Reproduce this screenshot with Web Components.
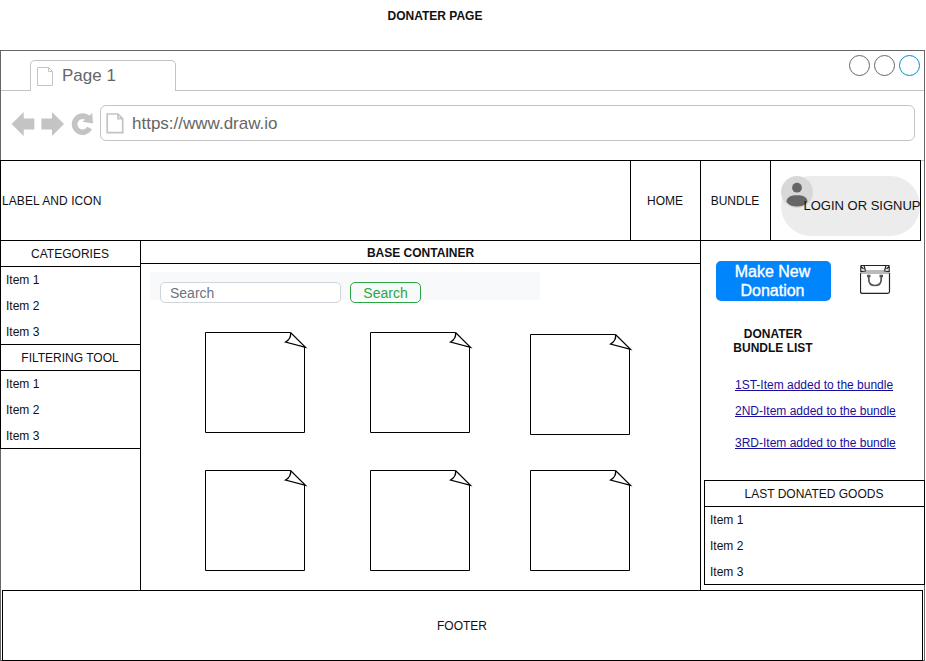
<!DOCTYPE html>
<html lang="en">
<head>
<meta charset="utf-8">
<title>Donater page</title>
<style>
body{margin:0;width:926px;height:661px;overflow:hidden;background:#fff;color:#111;font:12px/14px "Liberation Sans",Arial,sans-serif}
</style>
</head>
<body>
<donater-page></donater-page>
<script>
const define=(name,css,html)=>customElements.define(name,class extends HTMLElement{
  constructor(){super();this.attachShadow({mode:'open'}).innerHTML=`<style>*{box-sizing:border-box}:host{box-sizing:border-box;display:block}${css}</style>${typeof html==='function'?html(this):html}`;}
});

define('nav-icons',':host{display:flex;align-items:center;gap:6px;width:84px;height:26px}svg{display:block;fill:#c4c4c4}',`
<svg width="24" height="26" viewBox="0 0 24 26"><path d="M.5 13 12.7 1v6.5h10.6v11H12.7V25z"/></svg>
<svg width="24" height="26" viewBox="0 0 24 26"><path d="M23 13 11 1v6.5H.4v11H11V25z"/></svg>
<svg width="24" height="26" viewBox="0 0 24 26"><path d="M17.6 7.900A8 8 0 1 0 18.600 17" fill="none" stroke="#c4c4c4" stroke-width="5.6"/><path d="M21.300 2 22 12.600 11.500 10.700z"/></svg>`);

define('page-icon',':host{flex:none}svg{display:block}',el=>el.hasAttribute('bold')?
`<svg width="18" height="21" viewBox="0 0 18 21" fill="none" stroke="#c4c4c4" stroke-width="1.7"><path d="M1.200 1H12L16.700 5.700V19.700H1.200zM12 1V5.700H16.700"/></svg>`:
`<svg width="17" height="20" viewBox="0 0 17 20" fill="none" stroke="#c4c4c4"><path d="M.5 .5H11.5L15.5 4.5V18.5H.5zM11.5 .5V4.5H15.5"/></svg>`);

define('window-controls',':host{display:flex;gap:4px}i{width:21px;height:21px;border:1px solid #666;border-radius:50%}i:last-child{border-color:#008cce}','<i></i><i></i><i></i>');

define('browser-window',`
:host{width:925px;height:611px;border:1px solid #666}
.tabs{display:flex;height:40px;align-items:stretch}
.lead{width:29px;border-bottom:1px solid #c4c4c4}
.tab{width:146px;margin-top:9px;border:1px solid #c4c4c4;border-bottom:0;border-radius:5px 5px 0 0;display:flex;gap:8px;padding:6px 0 0 6px;font-size:17px;line-height:19px;color:#666}
.tab span{margin-top:-1px}
.rest{flex:1;border-bottom:1px solid #c4c4c4;display:flex;justify-content:flex-end;padding:4px 4px 0 0}
.bar{height:69px;display:flex;padding:14px 9px 0 10px;gap:5px}
nav-icons{margin-top:6px}
.address{flex:1;height:36px;border:1px solid #c4c4c4;border-radius:6px;display:flex;align-items:center;gap:8px;padding-left:5px;font-size:17px;line-height:19px;color:#666}
.content{margin:0 -1px -1px}`,`
<div class="tabs"><div class="lead"></div><div class="tab"><page-icon></page-icon><span><slot name="tab"></slot></span></div><div class="rest"><window-controls></window-controls></div></div>
<div class="bar"><nav-icons></nav-icons><div class="address"><page-icon bold></page-icon><slot name="url"></slot></div></div>
<div class="content"><slot></slot></div>`);

define('user-avatar',':host{width:32px;height:32px;flex:none}svg{display:block}',`<svg width="32" height="32" viewBox="0 0 32 32"><circle cx="16" cy="16" r="16" fill="#d8d8d8"/><circle cx="16" cy="11.700" r="4.900" fill="#666"/><path d="M5.500 26C5.500 21 10 19.300 16 19.300S26.500 21 26.500 26Q23 30.500 16 30.500T5.500 26z" fill="#666"/></svg>`);

define('login-button',`
:host{width:139px;height:60px;border-radius:30px;background:#ececec;display:flex;align-items:flex-start}
span{font-size:13px;line-height:16px;white-space:nowrap;margin:22px 0 0 -9px}`,
'<user-avatar></user-avatar><span><slot></slot></span>');

define('header-bar',`
:host{display:flex;height:81px}
.bar{display:flex;width:921px;border:1px solid #000;border-right:0}
.bar>div{border-right:1px solid #000;width:70px;display:flex;align-items:center;justify-content:center;padding-right:1px}
.bar>.brand{width:630px;justify-content:flex-start;padding-left:1px;letter-spacing:.09px}
.bar>.user{width:150px;align-items:flex-start;justify-content:flex-start;padding:14.500px 0 0 9.500px}
.fill{flex:1;border-top:1px solid #c4c4c4;margin-right:1px}`,`
<div class="bar"><div class="brand"><slot name="brand"></slot></div><div><slot name="home"></slot></div><div><slot name="bundle"></slot></div><div class="user"><slot name="user"></slot></div></div><div class="fill"></div>`);

define('item-list',`
h2{margin:0;font:inherit;height:26px;line-height:26px;text-align:center;border-bottom:1px solid #000;padding-right:1px}
div{height:26px;line-height:27px;padding-left:5px}
div:last-child{border-bottom:1px solid #000}`,
el=>`<h2>${el.getAttribute('heading')}</h2><div>Item 1</div><div>Item 2</div><div>Item 3</div>`);

define('search-bar',`
:host{width:390px;height:28px;background:#f8f9fa;display:flex;gap:9px;padding:10px 0 0 10px;font-size:14px;line-height:20px}
div{height:21px;border-radius:5px}
.field{width:181px;border:1px solid #ced4da;background:#fff;color:#6c757d;padding-left:9px}
.go{width:71px;border:1px solid #28a745;color:#28a745;text-align:center}`,
'<div class="field">Search</div><div class="go">Search</div>');

define('note-card',':host{width:101px;height:101px}svg{display:block;overflow:visible}',`<svg width="101" height="101" viewBox="0 0 101 101" fill="none" stroke="#000"><path d="M85.500 .5H.5V100.500H99.500V15"/><path stroke-width="1.200" d="M85.500 .5 100.500 15.300 80.500 10Q86.500 6.500 85.500 .5"/></svg>`);

define('base-container',`
:host{width:561px;height:349px;border:solid #000;border-width:0 1px}
h1{margin:0;font-size:12px;line-height:24px;height:23px;text-align:center;border-bottom:1px solid #000}
search-bar{margin:8px 0 0 9px}
.grid{display:grid;grid-template-columns:165px 160px 101px;grid-auto-rows:138px;margin:32px 0 0 64px}
.low{margin-top:2px}`,`
<h1><slot></slot></h1><search-bar></search-bar>
<div class="grid"><note-card></note-card><note-card></note-card><note-card class="low"></note-card><note-card></note-card><note-card></note-card><note-card></note-card></div>`);

define('bag-icon',':host{width:31px;height:30px}svg{display:block}',`<svg width="31" height="30" viewBox="0 0 31 30" fill="none" stroke="#222"><path stroke-width="1.200" d="M.5 8V26.500Q.5 28.300 2.300 28.300H27.700Q29.500 28.300 29.500 26.500V8M.8 .5H29.200M.8 .5V6.500L5.500 6 4 .5M29.200 .5V6.500L24.500 6 26 .5M1 1.500 3.500 4M29 1.500 26.500 4"/><path d="M.5 8H29.500M5 6H25" stroke="#777"/><path d="M8.800 11.500V14.500Q8.800 20.500 15 20.500T21.200 14.500V11.500" stroke="#555" stroke-width="1.700"/><path d="M7 11H10.500M19.500 11H23" stroke="#555" stroke-width="2.400"/></svg>`);

define('donation-panel',`
:host{width:224px;height:349px}
.top{display:flex;padding:19px 0 0 14.500px;gap:29.500px}
.make{width:115px;height:40px;margin-top:.5px;border-radius:5px;background:#0085fc;color:#fff;font-size:16px;line-height:19px;text-align:center;padding:1.500px 17px 0 16px;-webkit-text-stroke:.35px #fff}
bag-icon{margin-top:5px}
h3{margin:26px 0 0;width:144px;font-size:12px;line-height:14px;text-align:center}
ul{list-style:none;margin:23px 0 0 34px;padding:0;display:grid;grid-template-rows:26px 32px 20px;height:102px}
a{color:#1a0f9c;text-decoration:underline;text-underline-offset:1px}
.last{border:1px solid #000;border-bottom:0;margin-left:3px}`,`
<div class="top"><div class="make">Make New Donation</div><bag-icon></bag-icon></div>
<h3>DONATER<br>BUNDLE LIST</h3>
<ul><li><a>1ST-Item added to the bundle</a></li><li><a>2ND-Item added to the bundle</a></li><li><a>3RD-Item added to the bundle</a></li></ul>
<div class="last"><item-list heading="LAST DONATED GOODS"></item-list></div>`);

define('page-footer',':host{width:921px;height:71px;margin-left:2px;border:1px solid #000;text-align:center;line-height:70px;padding-right:1px}','<slot></slot>');

define('donater-page',`
.title{height:50px;width:870px;text-align:center;font-weight:bold;padding-top:9px}
.main{display:flex}
.side{width:140px}
.side item-list{border-left:1px solid #000}`,`
<div class="title">DONATER PAGE</div>
<browser-window><span slot="tab">Page 1</span><span slot="url">https://www.draw.io</span>
<header-bar><span slot="brand">LABEL AND ICON</span><span slot="home">HOME</span><span slot="bundle">BUNDLE</span><login-button slot="user">LOGIN OR SIGNUP</login-button></header-bar>
<div class="main"><div class="side"><item-list heading="CATEGORIES"></item-list><item-list heading="FILTERING TOOL"></item-list></div><base-container>BASE CONTAINER</base-container><donation-panel></donation-panel></div>
<page-footer>FOOTER</page-footer>
</browser-window>`);
</script>
</body>
</html>
